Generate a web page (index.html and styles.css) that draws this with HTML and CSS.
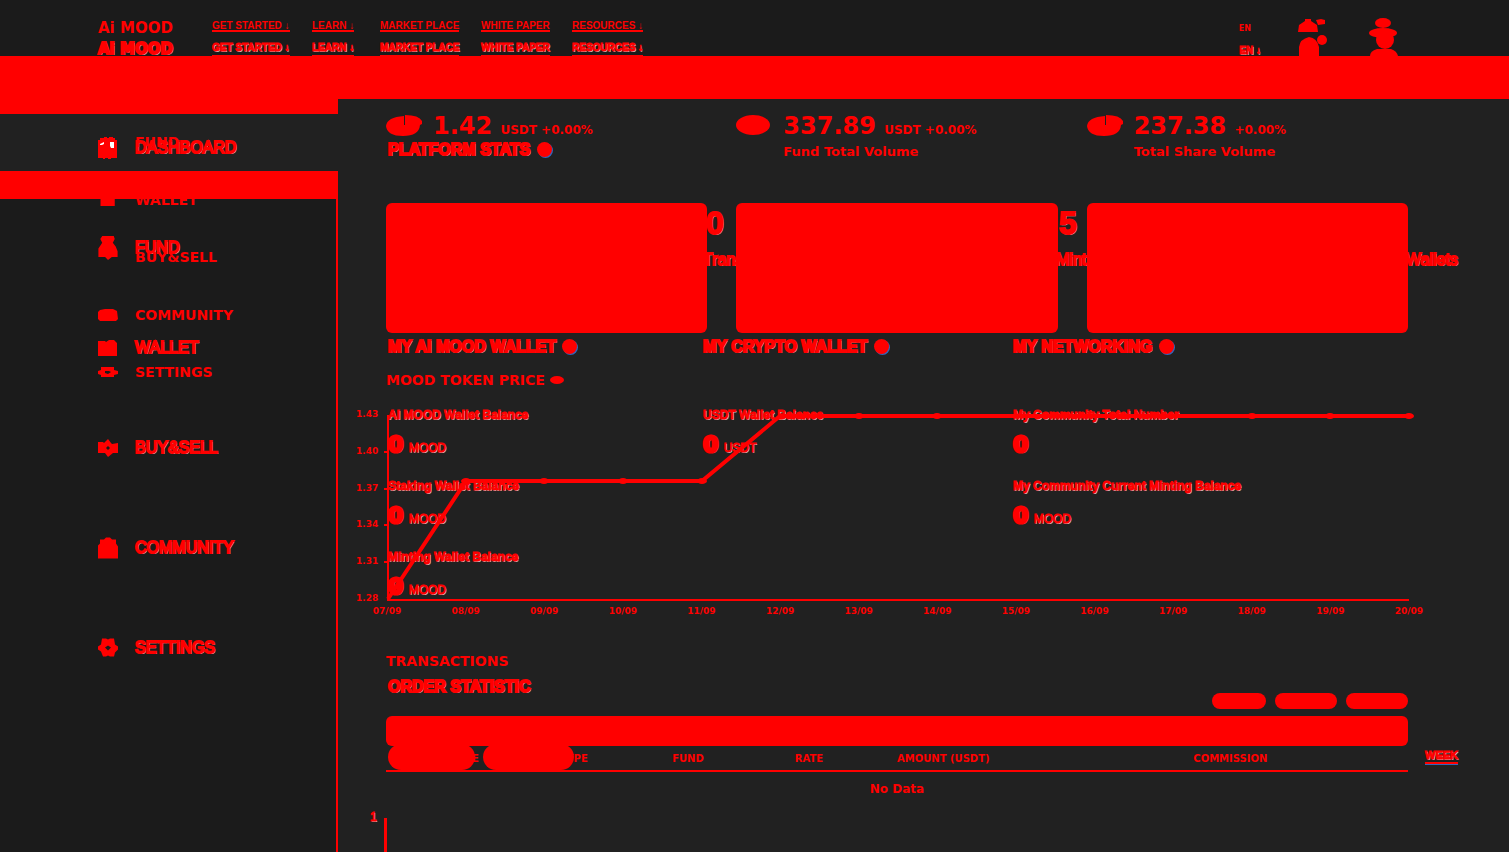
FILE: index.html
```html
<!DOCTYPE html>
<html lang="en">
<head>
<meta charset="utf-8">
<title>Ai MOOD</title>
<link rel="stylesheet" href="styles.css">
</head>
<body>
<svg class="defs" width="0" height="0" aria-hidden="true">
  <symbol id="house" viewBox="0 0 20 22"><path d="M0 3h2V1h4V0h3v1h2V0h4v1h2v2h2v18h-6v1h-3v-1H7v1H5v-1H0z"/><path fill="#fff" d="M2 7l4-2v2l-2 1H2zM12 5h4v6h-3l-1-2z"/></symbol>
  <symbol id="bag" viewBox="0 0 20 25"><path d="M4 0h12l1 3-2 4 3 4 2 5v6h-6l-4 3-3-3H0V13l4-6-2-4z"/></symbol>
  <symbol id="wallet" viewBox="0 0 20 16"><path d="M0 1h7l1 1 3-2h5l3 3v13H0z"/></symbol>
  <symbol id="swap" viewBox="0 0 20 18"><path fill-rule="evenodd" d="M0 3h5l1 1 4-4 3 4 1 1 6-1v10h-5l-5 4-3-4H0zM8 9l2 2 2-2-2-2z"/></symbol>
  <symbol id="group" viewBox="0 0 20 21"><path d="M2 2h4l2-2h4l2 2h4v4l2 3v12H0V8l2-2z"/></symbol>
  <symbol id="gear" viewBox="0 0 20 19"><path fill-rule="evenodd" d="M4 0h4l2 1 2-1h4l1 6 3 2v3l-3 3-1 4h-4l-2-1-2 1H5l-2-5-3-2V8l3-2zM10 7L7 9l3 3 3-3z"/></symbol>
</svg>
<div class="stack">

  <div class="page page-wide">
    <header class="top">
      <a class="logo" href="#">Ai MOOD</a>
      <nav class="menu">
        <span><a href="#">GET STARTED ↓</a></span><span><a href="#">LEARN ↓</a></span><span><a href="#">MARKET PLACE</a></span><span><a href="#">WHITE PAPER</a></span><span><a href="#">RESOURCES ↓</a></span>
      </nav>
      <a class="lang" href="#">EN ↓</a>
      <svg class="figure" viewBox="0 0 30 38" aria-hidden="true"><path d="M0 14l1-7 6-4V1h6v2l6 4 1 7zM18 2l5-1 4 1v4l-7 1zM1 38V29q1-8 10-10 8 1 10 10v9z"/><circle cx="24" cy="22" r="5"/></svg>
      <svg class="figure" viewBox="0 0 30 38" aria-hidden="true"><ellipse cx="15" cy="5" rx="8" ry="5"/><ellipse cx="15" cy="15" rx="14" ry="5"/><circle cx="17" cy="22" r="9"/><path d="M2 38q0-5 7-7h14q6 2 7 7z"/></svg>
    </header>
    <div class="body">
      <nav class="side">
        <a href="#"><svg><use href="#house"/></svg>DASHBOARD</a>
        <a href="#"><svg><use href="#bag"/></svg>FUND</a>
        <a href="#"><svg><use href="#wallet"/></svg>WALLET</a>
        <a href="#"><svg><use href="#swap"/></svg>BUY&amp;SELL</a>
        <a href="#"><svg><use href="#group"/></svg>COMMUNITY</a>
        <a href="#"><svg><use href="#gear"/></svg>SETTINGS</a>
      </nav>
      <main class="main">
        <h2>PLATFORM STATS <i class="dot"></i></h2>
        <section class="totals">
          <div></div>
          <div><b>0</b><span>Trans</span></div>
          <div><b>5</b><span>Mint</span></div>
          <div><span class="last">Wallets</span></div>
        </section>
        <section class="wallets">
          <div>
            <h2>MY AI MOOD WALLET <i class="dot"></i></h2>
            <dl><dt>AI MOOD Wallet Balance</dt><dd><b>0</b> MOOD</dd>
            <dt>Staking Wallet Balance</dt><dd><b>0</b> MOOD</dd>
            <dt>Minting Wallet Balance</dt><dd><b>0</b> MOOD</dd></dl>
          </div>
          <div>
            <h2>MY CRYPTO WALLET <i class="dot"></i></h2>
            <dl><dt>USDT Wallet Balance</dt><dd><b>0</b> USDT</dd></dl>
          </div>
          <div>
            <h2>MY NETWORKING <i class="dot"></i></h2>
            <dl><dt>My Community Total Number</dt><dd><b>0</b></dd>
            <dt>My Community Current Minting Balance</dt><dd><b>0</b> MOOD</dd></dl>
          </div>
        </section>
        <h2>ORDER STATISTIC</h2>
        <div class="tabs"><button aria-label="Orders"></button><button aria-label="Statistic"></button><a href="#">WEEK</a></div>
        <div class="orders"><span>1</span><i></i></div>
      </main>
    </div>
  </div>

  <div class="page page-compact">
    <header class="top">
      <a class="logo" href="#">Ai MOOD</a>
      <nav class="menu">
        <span><a href="#">GET STARTED ↓</a></span><span><a href="#">LEARN ↓</a></span><span><a href="#">MARKET PLACE</a></span><span><a href="#">WHITE PAPER</a></span><span><a href="#">RESOURCES ↓</a></span>
      </nav>
      <a class="lang" href="#">EN</a>
    </header>
    <div class="band"></div>
    <div class="body">
      <nav class="side">
        <a href="#">DASHBOARD</a>
        <a href="#"><svg></svg>FUND</a>
        <a href="#"><svg><use href="#wallet"/></svg>WALLET</a>
        <a href="#"><svg></svg>BUY&amp;SELL</a>
        <a href="#"><svg viewBox="0 0 20 12"><path d="M2 1l5-1h8l4 2 1 8-2 2H2l-2-2V3z"/></svg>COMMUNITY</a>
        <a href="#"><svg viewBox="0 0 20 10"><path fill-rule="evenodd" d="M3 0h13v3l4 1v3l-4 1v2H3V8L0 7V4l3-1zM7 4v2l3 1 3-2-2-1z"/></svg>SETTINGS</a>
      </nav>
      <main class="main">
        <section class="rates">
          <div><svg viewBox="0 0 36 21"><path d="M19 0q14 0 17 6v3l-2 1q-1 11-17 11T0 11Q1 2 18 1v9h1z"/></svg><p><b>1.42</b> USDT +0.00%</p></div>
          <div><svg viewBox="0 0 36 21"><ellipse cx="17" cy="10" rx="17" ry="10"/></svg><p><b>337.89</b> USDT +0.00%<span>Fund Total Volume</span></p></div>
          <div><svg viewBox="0 0 36 21"><path d="M19 0q14 0 17 6v3l-2 1q-1 11-17 11T0 11Q1 2 18 1v9h1z"/></svg><p><b>237.38</b> +0.00%<span>Total Share Volume</span></p></div>
        </section>
        <section class="cards"><div></div><div></div><div></div></section>
        <h2>MOOD TOKEN PRICE <i class="dot"></i></h2>
        <div class="chart">
          <div class="y-axis"><span>1.43</span><span>1.40</span><span>1.37</span><span>1.34</span><span>1.31</span><span>1.28</span></div>
          <svg viewBox="0 0 1022 190" preserveAspectRatio="none" aria-hidden="true">
            <path class="axis" d="M2 2V187H1023M-2 39h4M-2 76h4M-2 112h4M-2 149h4"/>
            <path class="line" d="M2 186L80 68H316L394 3H1023"/>
            <g><ellipse cx="80" cy="68" rx="5" ry="3"/><ellipse cx="158" cy="68" rx="5" ry="3"/><ellipse cx="237" cy="68" rx="5" ry="3"/><ellipse cx="316" cy="68" rx="5" ry="3"/><ellipse cx="473" cy="3" rx="5" ry="3"/><ellipse cx="551" cy="3" rx="5" ry="3"/><ellipse cx="866" cy="3" rx="5" ry="3"/><ellipse cx="944" cy="3" rx="5" ry="3"/><ellipse cx="1023" cy="3" rx="5" ry="3"/></g>
          </svg>
          <div class="x-axis"><span>07/09</span><span>08/09</span><span>09/09</span><span>10/09</span><span>11/09</span><span>12/09</span><span>13/09</span><span>14/09</span><span>15/09</span><span>16/09</span><span>17/09</span><span>18/09</span><span>19/09</span><span>20/09</span></div>
        </div>
        <h2>TRANSACTIONS</h2>
        <div class="filters"><button aria-label="Day"></button><button aria-label="Week"></button><button aria-label="Month"></button></div>
        <div class="bar"></div>
        <table>
          <thead><tr><th>DATE</th><th>TYPE</th><th>FUND</th><th>RATE</th><th>AMOUNT (USDT)</th><th>COMMISSION</th></tr></thead>
          <tbody><tr><td colspan="6">No Data</td></tr></tbody>
        </table>
      </main>
    </div>
  </div>

</div>
</body>
</html>
```
FILE: styles.css
```css
* { box-sizing: border-box; }
body { margin: 0; background: #212121; color: #f00; font-family: "Liberation Sans", Arial, sans-serif; font-size: 12px; }
a { color: inherit; text-decoration: none; }
h2, p, dl, dd { margin: 0; }
button { border: 0; padding: 0; background: #f00; }
svg { fill: #f00; flex: none; }
.defs { position: absolute; }
.stack { display: grid; height: 100vh; overflow: hidden; }
.page { grid-area: 1 / 1; min-width: 0; display: flex; flex-direction: column; }
.body { display: grid; grid-template-columns: 338px minmax(0, 1fr); flex: 1; }
.top { display: flex; padding: 0 111px 0 98px; }
.logo { width: 114px; font-family: "DejaVu Sans", sans-serif; font-weight: bold; font-size: 15px; white-space: nowrap; }
.menu { display: grid; grid-template-columns: 100px 68px 101px 91px auto; margin-right: auto; font-weight: bold; white-space: nowrap; }
.menu a { display: inline-block; border-bottom: 2px solid #f00; }
.side a { display: flex; align-items: center; gap: 17px; padding-left: 98px; }
.side svg { width: 20px; overflow: visible; }
.dot { display: inline-block; width: 15px; height: 15px; border-radius: 50%; background: #f00; vertical-align: -2px; }

/* wide layout */
.page-wide { -webkit-text-stroke: 1px #f00; text-shadow: 1px 1px 0 #bbb; }
.page-wide .top { height: 99px; background: #1b1b1b; align-items: flex-start; }
.page-wide .logo { line-height: 20px; padding-top: 39px; -webkit-text-stroke-width: 2px; }
.page-wide .menu { font-size: 10px; line-height: 14px; padding-top: 41px; }
.page-wide .lang { font-size: 10px; font-weight: bold; line-height: 14px; padding-top: 44px; margin-right: 37px; }
.figure { width: 30px; height: 38px; margin-top: 18px; overflow: visible; }
.figure + .figure { margin-left: 40px; }
.page-wide .side { margin-top: -1px; background: linear-gradient(#f00, #f00) right 100px / 2px 100% no-repeat, linear-gradient(#212121 100px, #1b1b1b 100px); }
.page-wide .side a { height: 100px; font-size: 16px; font-weight: normal; -webkit-text-stroke-width: 2px; }
.page-wide .side svg { height: 24px; }
.page-wide .main { padding: 41px 48px 0 50px; }
.page-wide h2 { font-size: 16px; line-height: 20px; height: 20px; white-space: nowrap; -webkit-text-stroke-width: 2px; }
.page-wide .dot { margin-left: 2px; box-shadow: 1px 1px 0 #36b; }
.totals { display: grid; grid-template-columns: 315fr 353fr 350fr 55fr; margin-top: 46px; height: 131px; }
.totals b { display: block; padding-left: 3px; font-size: 32px; line-height: 34px; -webkit-text-stroke-width: 2px; }
.totals span { display: block; font-size: 16px; line-height: 20px; margin-top: 10px; -webkit-text-stroke-width: 2px; }
.totals .last { margin-top: 44px; }
.wallets { display: grid; grid-template-columns: 315fr 310fr 448fr; height: 340px; }
.wallets dl { margin-top: 50px; }
.wallets dt { font-size: 12px; font-weight: bold; line-height: 16px; white-space: nowrap; }
.wallets dd { font-size: 12px; line-height: 28px; height: 55px; padding-top: 8px; }
.wallets dd b { margin-right: 2px; font-family: "DejaVu Sans", sans-serif; font-size: 22px; -webkit-text-stroke-width: 3px; }
.tabs { display: flex; gap: 8px; margin: 47px 3px 0 0; }
.tabs button { width: 87px; height: 26px; border-radius: 13px; }
.tabs button + button { width: 91px; }
.tabs a { margin-left: auto; font-size: 11px; font-weight: bold; line-height: 14px; padding-top: 4px; height: 20px; border-bottom: 2px solid #f00; box-shadow: 0 1px 0 #36b; }
.orders { display: flex; align-items: flex-start; justify-content: space-between; margin: 40px 0 0 -18px; width: 17px; font-size: 12px; line-height: 14px; }
.orders i { width: 3px; height: 60px; margin-top: 8px; background: #f00; }

/* compact layout */
.page-compact { z-index: 1; font-family: "DejaVu Sans", sans-serif; font-weight: bold; }
.page-compact .top { height: 56px; padding-top: 21px; }
.page-compact .logo { line-height: 14px; }
.page-compact .menu { font: bold 10px/9px "Liberation Sans", sans-serif; }
.page-compact .lang { font-size: 8px; line-height: 16px; margin-right: 147px; }
.page-compact .side { display: grid; grid-auto-rows: 1fr; height: 345px; font-size: 14px; }
.band { height: 43px; margin-bottom: -43px; background: #f00; }
.page-compact .side a:first-child { background: #f00; }
.page-compact .side a:nth-child(3) { background: linear-gradient(#f00 28px, transparent 28px); }
.page-compact .side svg { height: 12px; }
.page-compact .main { padding: 59px 101px 0 48px; }
.rates, .cards { display: grid; grid-template-columns: repeat(3, minmax(0, 1fr)); gap: 29px; }
.rates { height: 88px; }
.rates > div { display: flex; align-items: flex-start; gap: 11px; }
.rates svg { width: 36px; height: 21px; }
.rates p { font-size: 12px; line-height: 22px; white-space: nowrap; }
.rates b { font-size: 24px; margin-right: 4px; }
.rates span { display: block; font-size: 13px; line-height: 22px; }
.cards > div { height: 130px; border-radius: 6px; background: #f00; }
.page-compact h2 { font-size: 14px; line-height: 16px; height: 16px; white-space: nowrap; }
.page-compact .cards + h2 { margin-top: 39px; }
.page-compact .dot { width: 14px; height: 8px; vertical-align: 1px; }
.chart { display: grid; grid-template-columns: minmax(0, 1fr); margin-top: 25px; }
.chart svg { grid-area: 1 / 1; width: 100%; height: 190px; overflow: visible; }
.axis { fill: none; stroke: #f00; stroke-width: 2; }
.line { fill: none; stroke: #f00; stroke-width: 4; }
.y-axis { grid-area: 1 / 1; display: flex; flex-direction: column; justify-content: space-between; width: 24px; height: 194px; margin: -4px 0 0 -30px; font-size: 9px; line-height: 10px; }
.x-axis { display: flex; justify-content: space-between; margin: 2px -17px 0 -15px; font-size: 9px; line-height: 12px; }
.x-axis span { width: 32px; text-align: center; }
.chart + h2 { margin-top: 36px; }
.filters { display: flex; justify-content: flex-end; gap: 9px; margin-top: 24px; }
.filters button { width: 62px; height: 16px; border-radius: 8px; }
.filters button:first-child { width: 54px; }
.bar { height: 30px; margin-top: 7px; border-radius: 6px; background: #f00; }
table { width: 100%; table-layout: fixed; border-collapse: collapse; }
th { height: 25px; padding: 0; border-bottom: 2px solid #f00; text-align: left; font-size: 10px; white-space: nowrap; }
th:nth-child(1) { width: 16%; padding-left: 64px; }
th:nth-child(2), th:nth-child(3) { width: 12%; }
th:nth-child(2) { padding-left: 10px; }
th:nth-child(4) { width: 10%; }
th:nth-child(5) { width: 29%; }
td { height: 34px; padding: 0; text-align: center; font-size: 12px; }
```
